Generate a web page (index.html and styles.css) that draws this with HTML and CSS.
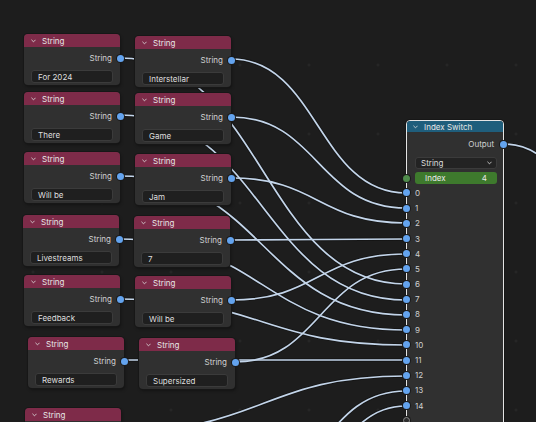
FILE: index.html
```html
<!DOCTYPE html>
<html>
<head>
<meta charset="utf-8">
<link rel="stylesheet" href="styles.css">
</head>
<body>
<div class="canvas">
  <svg class="wires" width="536" height="422" viewBox="0 0 536 422">
    <defs>
      <path id="w1" d="M231 59 C318 59 318 193 406 193"/>
      <path id="w2" d="M231 117 C318 117 318 208 406 208"/>
      <path id="w3" d="M231 178 C318 178 318 223 406 223"/>
      <path id="w4" d="M230 240 C318 240 318 239 406 239"/>
      <path id="w5" d="M231 300 C318 300 318 254 406 254"/>
      <path id="w6" d="M235 362 C320 362 320 269 406 269"/>
      <path id="a1" d="M120 58 C263 58 263 284 406 284"/>
      <path id="a2" d="M120 115 C263 115 263 300 406 300"/>
      <path id="a3" d="M120 176 C263 176 263 315 406 315"/>
      <path id="a4" d="M119 239 C262 239 262 330 406 330"/>
      <path id="a5" d="M120 299 C263 299 263 345 406 345"/>
      <path id="a6" d="M124 360 C265 360 265 360 406 360"/>
      <path id="a7" d="M121 431 C263 431 263 376 406 376"/>
      <path id="x13" d="M240 490 C323 490 323 391 406 391"/>
      <path id="x14" d="M250 525 C328 525 328 406 406 406"/>
      <path id="out" d="M503 144 C561 144 562 210 620 210"/>
    </defs>
    <g class="wire-outer">
      <use href="#a1"/><use href="#a2"/><use href="#a3"/><use href="#a4"/><use href="#a5"/><use href="#a6"/><use href="#a7"/>
      <use href="#x13"/><use href="#x14"/>
      <use href="#w1"/><use href="#w2"/><use href="#w3"/><use href="#w4"/><use href="#w5"/><use href="#w6"/>
      <use href="#out"/>
    </g>
    <g class="wire-inner">
      <use href="#a1"/><use href="#a2"/><use href="#a3"/><use href="#a4"/><use href="#a5"/><use href="#a6"/><use href="#a7"/>
      <use href="#x13"/><use href="#x14"/>
      <use href="#w1"/><use href="#w2"/><use href="#w3"/><use href="#w4"/><use href="#w5"/><use href="#w6"/>
      <use href="#out"/>
    </g>
  </svg>

  <div class="node str n-a1">
    <div class="hdr"><svg class="chev" viewBox="0 0 6 4"><path d="M0.5 0.5 L3 3 L5.5 0.5"/></svg><span>String</span></div>
    <div class="body"><div class="out">String<i class="sock"></i></div><div class="field">For 2024</div></div>
  </div>
  <div class="node str n-a2">
    <div class="hdr"><svg class="chev" viewBox="0 0 6 4"><path d="M0.5 0.5 L3 3 L5.5 0.5"/></svg><span>String</span></div>
    <div class="body"><div class="out">String<i class="sock"></i></div><div class="field">There</div></div>
  </div>
  <div class="node str n-a3">
    <div class="hdr"><svg class="chev" viewBox="0 0 6 4"><path d="M0.5 0.5 L3 3 L5.5 0.5"/></svg><span>String</span></div>
    <div class="body"><div class="out">String<i class="sock"></i></div><div class="field">Will be</div></div>
  </div>
  <div class="node str n-a4">
    <div class="hdr"><svg class="chev" viewBox="0 0 6 4"><path d="M0.5 0.5 L3 3 L5.5 0.5"/></svg><span>String</span></div>
    <div class="body"><div class="out">String<i class="sock"></i></div><div class="field">Livestreams</div></div>
  </div>
  <div class="node str n-a5">
    <div class="hdr"><svg class="chev" viewBox="0 0 6 4"><path d="M0.5 0.5 L3 3 L5.5 0.5"/></svg><span>String</span></div>
    <div class="body"><div class="out">String<i class="sock"></i></div><div class="field">Feedback</div></div>
  </div>
  <div class="node str n-a6">
    <div class="hdr"><svg class="chev" viewBox="0 0 6 4"><path d="M0.5 0.5 L3 3 L5.5 0.5"/></svg><span>String</span></div>
    <div class="body"><div class="out">String<i class="sock"></i></div><div class="field">Rewards</div></div>
  </div>
  <div class="node str n-a7">
    <div class="hdr"><svg class="chev" viewBox="0 0 6 4"><path d="M0.5 0.5 L3 3 L5.5 0.5"/></svg><span>String</span></div>
    <div class="body"><div class="out"><i class="sock"></i></div><div class="field"></div></div>
  </div>

  <div class="node str n-b1">
    <div class="hdr"><svg class="chev" viewBox="0 0 6 4"><path d="M0.5 0.5 L3 3 L5.5 0.5"/></svg><span>String</span></div>
    <div class="body"><div class="out">String<i class="sock"></i></div><div class="field">Interstellar</div></div>
  </div>
  <div class="node str n-b2">
    <div class="hdr"><svg class="chev" viewBox="0 0 6 4"><path d="M0.5 0.5 L3 3 L5.5 0.5"/></svg><span>String</span></div>
    <div class="body"><div class="out">String<i class="sock"></i></div><div class="field">Game</div></div>
  </div>
  <div class="node str n-b3">
    <div class="hdr"><svg class="chev" viewBox="0 0 6 4"><path d="M0.5 0.5 L3 3 L5.5 0.5"/></svg><span>String</span></div>
    <div class="body"><div class="out">String<i class="sock"></i></div><div class="field">Jam</div></div>
  </div>
  <div class="node str n-b4">
    <div class="hdr"><svg class="chev" viewBox="0 0 6 4"><path d="M0.5 0.5 L3 3 L5.5 0.5"/></svg><span>String</span></div>
    <div class="body"><div class="out">String<i class="sock"></i></div><div class="field">7</div></div>
  </div>
  <div class="node str n-b5">
    <div class="hdr"><svg class="chev" viewBox="0 0 6 4"><path d="M0.5 0.5 L3 3 L5.5 0.5"/></svg><span>String</span></div>
    <div class="body"><div class="out">String<i class="sock"></i></div><div class="field">Will be</div></div>
  </div>
  <div class="node str n-b6">
    <div class="hdr"><svg class="chev" viewBox="0 0 6 4"><path d="M0.5 0.5 L3 3 L5.5 0.5"/></svg><span>String</span></div>
    <div class="body"><div class="out">String<i class="sock"></i></div><div class="field">Supersized</div></div>
  </div>

  <div class="node switch">
    <div class="hdr sw-hdr"><svg class="chev" viewBox="0 0 6 4"><path d="M0.5 0.5 L3 3 L5.5 0.5"/></svg><span>Index Switch</span></div>
    <div class="sw-body">
      <div class="out sw-out">Output<i class="sock"></i></div>
      <div class="dropdown"><span>String</span><svg class="chev dd-chev" viewBox="0 0 6 4"><path d="M0.5 0.5 L3 3 L5.5 0.5"/></svg></div>
      <div class="index"><i class="sock green"></i><span>Index</span><span>4</span></div>
      <div class="inputs">
        <div class="in"><i class="sock"></i>0</div>
        <div class="in"><i class="sock"></i>1</div>
        <div class="in"><i class="sock"></i>2</div>
        <div class="in"><i class="sock"></i>3</div>
        <div class="in"><i class="sock"></i>4</div>
        <div class="in"><i class="sock"></i>5</div>
        <div class="in"><i class="sock"></i>6</div>
        <div class="in"><i class="sock"></i>7</div>
        <div class="in"><i class="sock"></i>8</div>
        <div class="in"><i class="sock"></i>9</div>
        <div class="in"><i class="sock"></i>10</div>
        <div class="in"><i class="sock"></i>11</div>
        <div class="in"><i class="sock"></i>12</div>
        <div class="in"><i class="sock"></i>13</div>
        <div class="in"><i class="sock"></i>14</div>
        <div class="in"><i class="sock hollow"></i></div>
      </div>
    </div>
  </div>
</div>
</body>
</html>
```

FILE: styles.css
```css
* { box-sizing: border-box; }
html, body { margin: 0; padding: 0; background: #1d1d1d; }
body {
  font-family: Inter, "DejaVu Sans", sans-serif;
  font-size: 8px;
  color: #d4d4d4;
}
.canvas {
  position: relative;
  width: 536px;
  height: 422px;
  overflow: hidden;
  background-color: #1d1d1d;
  background-image: radial-gradient(circle, #2c2c2c 0.9px, transparent 1.3px);
  background-size: 69px 69px;
  background-position: 274.5px 30.5px;
}
.wires {
  position: absolute;
  left: 0;
  top: 0;
  overflow: visible;
}
.wires use { fill: none; }
.wire-outer use { stroke: #151515; stroke-width: 3.4; }
.wire-inner use { stroke: #c3d5ea; stroke-width: 1.7; }

.node {
  position: absolute;
  width: 96px;
  background: #303030;
  border-radius: 4px;
  box-shadow: 0 0 0 1px #171717, 1px 2px 3px rgba(0,0,0,0.35);
}
.n-a1 { left: 24px; top: 34px; }
.n-a2 { left: 24px; top: 92px; }
.n-a3 { left: 24px; top: 152px; }
.n-a4 { left: 23px; top: 215px; }
.n-a5 { left: 24px; top: 275px; }
.n-a6 { left: 28px; top: 337px; }
.n-a7 { left: 25px; top: 408px; }
.n-b1 { left: 135px; top: 36px; }
.n-b2 { left: 135px; top: 93px; }
.n-b3 { left: 135px; top: 154px; }
.n-b4 { left: 134px; top: 216px; }
.n-b5 { left: 135px; top: 276px; }
.n-b6 { left: 139px; top: 338px; }

.hdr {
  height: 13px;
  background: #7e2b49;
  border-radius: 4px 4px 0 0;
  display: flex;
  align-items: center;
  padding-left: 7px;
  gap: 6px;
  color: #e6e6e6;
}
.chev {
  width: 5px;
  height: 4px;
  fill: none;
  stroke: #dcdcdc;
  stroke-width: 1;
}
.body { padding: 4px 0 2px; }
.out {
  position: relative;
  height: 14px;
  display: flex;
  align-items: center;
  justify-content: flex-end;
  padding-right: 8px;
  color: #d2d2d2;
}
.sock {
  position: absolute;
  width: 7px;
  height: 7px;
  border-radius: 50%;
  background: #63a3ee;
  box-shadow: 0 0 0 1px #1a1a1a;
}
.out .sock { right: -3.5px; top: 3.5px; }
.field {
  margin: 5px 7px 0;
  height: 13px;
  background: #1f1f1f;
  border: 1px solid #3b3b3b;
  border-radius: 3px;
  padding-left: 6px;
  display: flex;
  align-items: center;
  color: #dedede;
}

/* Index Switch */
.switch {
  left: 406px;
  top: 120px;
  width: 98px;
  height: 330px;
  border: 1px solid #e4e4e4;
  box-shadow: 0 0 0 1px #171717;
}
.sw-hdr {
  height: 11px;
  background: #1f5e7c;
  border-radius: 3px 3px 0 0;
  padding-left: 6px;
}
.sw-out {
  margin-top: 5px;
  padding-right: 9px;
}
.sw-out .sock { right: -4px; }
.dropdown {
  margin: 6px 6px 0 8px;
  height: 12px;
  background: #232323;
  border: 1px solid #3b3b3b;
  border-radius: 3px;
  display: flex;
  align-items: center;
  justify-content: space-between;
  padding: 0 4px 0 5px;
  color: #dcdcdc;
}
.dd-chev { width: 5px; height: 4px; }
.index {
  position: relative;
  margin: 3px 6px 0 8px;
  height: 12px;
  background: #3e7a2d;
  border-radius: 3px;
  display: flex;
  align-items: center;
  justify-content: space-between;
  padding: 0 10px 0 10px;
  color: #e8e8e8;
}
.index .sock { left: -12px; top: 2.5px; }
.sock.green { background: #4f8b4b; }
.inputs { margin-top: 1.4px; }
.in {
  position: relative;
  height: 15.2px;
  display: flex;
  align-items: center;
  padding-left: 8px;
  color: #cfcfcf;
}
.in .sock { left: -4px; top: 4.1px; }
.sock.hollow {
  background: #2e2e2e;
  box-shadow: 0 0 0 1px #1a1a1a;
  border: 1px solid #8a8a8a;
}
```
